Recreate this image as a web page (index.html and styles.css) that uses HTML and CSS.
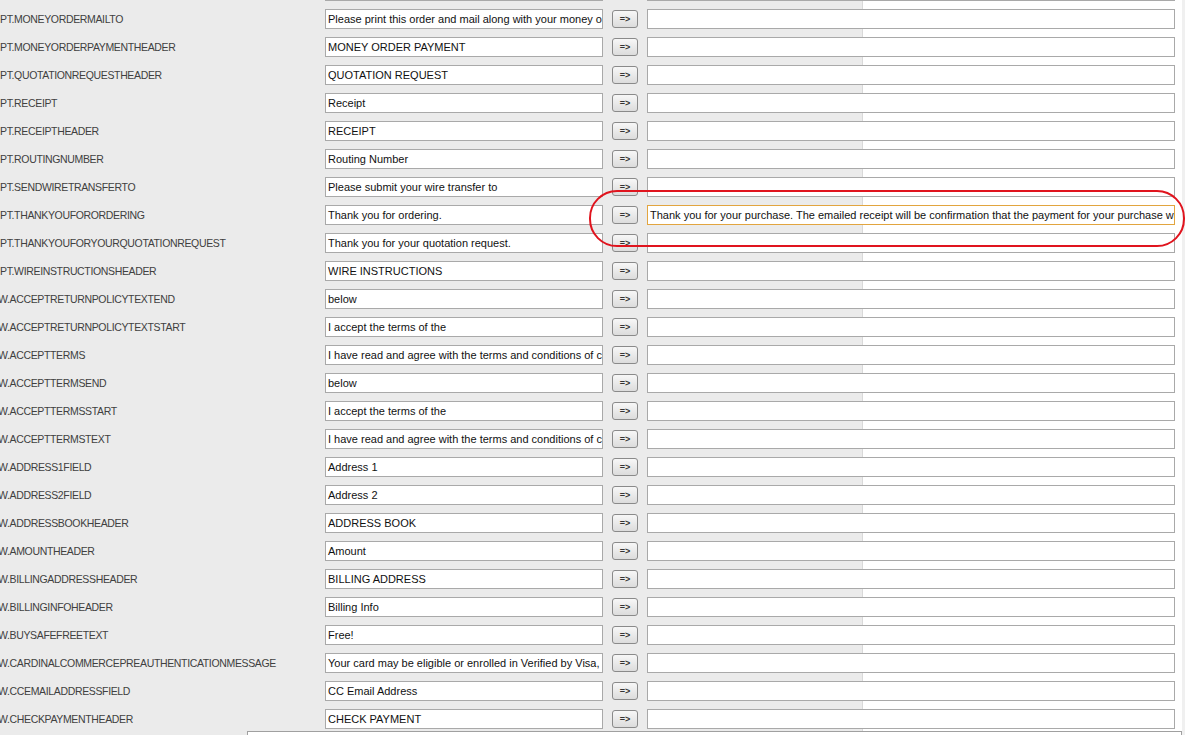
FILE: index.html
```html
<!DOCTYPE html>
<html>
<head>
<meta charset="utf-8">
<link rel="stylesheet" href="styles.css">
</head>
<body>
<div class="page">
  <div class="rows">
    <div class="row"><div class="label"></div><div class="src"></div><button class="copy">=&gt;</button><div class="dst"></div></div>
    <div class="row"><div class="label">PT.MONEYORDERMAILTO</div><div class="src">Please print this order and mail along with your money order</div><button class="copy">=&gt;</button><div class="dst"></div></div>
    <div class="row"><div class="label">PT.MONEYORDERPAYMENTHEADER</div><div class="src">MONEY ORDER PAYMENT</div><button class="copy">=&gt;</button><div class="dst"></div></div>
    <div class="row"><div class="label">PT.QUOTATIONREQUESTHEADER</div><div class="src">QUOTATION REQUEST</div><button class="copy">=&gt;</button><div class="dst"></div></div>
    <div class="row"><div class="label">PT.RECEIPT</div><div class="src">Receipt</div><button class="copy">=&gt;</button><div class="dst"></div></div>
    <div class="row"><div class="label">PT.RECEIPTHEADER</div><div class="src">RECEIPT</div><button class="copy">=&gt;</button><div class="dst"></div></div>
    <div class="row"><div class="label">PT.ROUTINGNUMBER</div><div class="src">Routing Number</div><button class="copy">=&gt;</button><div class="dst"></div></div>
    <div class="row"><div class="label">PT.SENDWIRETRANSFERTO</div><div class="src">Please submit your wire transfer to</div><button class="copy">=&gt;</button><div class="dst"></div></div>
    <div class="row"><div class="label">PT.THANKYOUFORORDERING</div><div class="src">Thank you for ordering.</div><button class="copy">=&gt;</button><div class="dst active">Thank you for your purchase. The emailed receipt will be confirmation that the payment for your purchase was received.</div></div>
    <div class="row"><div class="label">PT.THANKYOUFORYOURQUOTATIONREQUEST</div><div class="src">Thank you for your quotation request.</div><button class="copy">=&gt;</button><div class="dst"></div></div>
    <div class="row"><div class="label">PT.WIREINSTRUCTIONSHEADER</div><div class="src">WIRE INSTRUCTIONS</div><button class="copy">=&gt;</button><div class="dst"></div></div>
    <div class="row"><div class="label w">W.ACCEPTRETURNPOLICYTEXTEND</div><div class="src">below</div><button class="copy">=&gt;</button><div class="dst"></div></div>
    <div class="row"><div class="label w">W.ACCEPTRETURNPOLICYTEXTSTART</div><div class="src">I accept the terms of the</div><button class="copy">=&gt;</button><div class="dst"></div></div>
    <div class="row"><div class="label w">W.ACCEPTTERMS</div><div class="src">I have read and agree with the terms and conditions of companyname</div><button class="copy">=&gt;</button><div class="dst"></div></div>
    <div class="row"><div class="label w">W.ACCEPTTERMSEND</div><div class="src">below</div><button class="copy">=&gt;</button><div class="dst"></div></div>
    <div class="row"><div class="label w">W.ACCEPTTERMSSTART</div><div class="src">I accept the terms of the</div><button class="copy">=&gt;</button><div class="dst"></div></div>
    <div class="row"><div class="label w">W.ACCEPTTERMSTEXT</div><div class="src">I have read and agree with the terms and conditions of companyname</div><button class="copy">=&gt;</button><div class="dst"></div></div>
    <div class="row"><div class="label w">W.ADDRESS1FIELD</div><div class="src">Address 1</div><button class="copy">=&gt;</button><div class="dst"></div></div>
    <div class="row"><div class="label w">W.ADDRESS2FIELD</div><div class="src">Address 2</div><button class="copy">=&gt;</button><div class="dst"></div></div>
    <div class="row"><div class="label w">W.ADDRESSBOOKHEADER</div><div class="src">ADDRESS BOOK</div><button class="copy">=&gt;</button><div class="dst"></div></div>
    <div class="row"><div class="label w">W.AMOUNTHEADER</div><div class="src">Amount</div><button class="copy">=&gt;</button><div class="dst"></div></div>
    <div class="row"><div class="label w">W.BILLINGADDRESSHEADER</div><div class="src">BILLING ADDRESS</div><button class="copy">=&gt;</button><div class="dst"></div></div>
    <div class="row"><div class="label w">W.BILLINGINFOHEADER</div><div class="src">Billing Info</div><button class="copy">=&gt;</button><div class="dst"></div></div>
    <div class="row"><div class="label w">W.BUYSAFEFREETEXT</div><div class="src">Free!</div><button class="copy">=&gt;</button><div class="dst"></div></div>
    <div class="row"><div class="label w">W.CARDINALCOMMERCEPREAUTHENTICATIONMESSAGE</div><div class="src">Your card may be eligible or enrolled in Verified by Visa, MasterCard SecureCode</div><button class="copy">=&gt;</button><div class="dst"></div></div>
    <div class="row"><div class="label w">W.CCEMAILADDRESSFIELD</div><div class="src">CC Email Address</div><button class="copy">=&gt;</button><div class="dst"></div></div>
    <div class="row"><div class="label w">W.CHECKPAYMENTHEADER</div><div class="src">CHECK PAYMENT</div><button class="copy">=&gt;</button><div class="dst"></div></div>
  </div>
  <div class="footer-box"></div>
  <div class="highlight"></div>
</div>
</body>
</html>
```

FILE: styles.css
```css
html, body {
  margin: 0;
  padding: 0;
  width: 1185px;
  height: 735px;
  overflow: hidden;
}
body {
  font-family: Tahoma, "Liberation Sans", Arial, sans-serif;
  font-size: 11px;
  color: #000;
}
.page {
  position: relative;
  width: 1185px;
  height: 735px;
  background: linear-gradient(to right, #ebebeb 0, #ebebeb 862px, #d9d9d9 862px, #d9d9d9 863px, #ffffff 863px, #ffffff 1182px, #f0f0f0 1182px);
  overflow: hidden;
}
.rows {
  margin-top: -23px;
  display: flex;
  flex-direction: column;
}
.row {
  height: 28px;
  display: flex;
  align-items: center;
}
.label {
  width: 325px;
  flex: none;
  color: #404040;
  white-space: nowrap;
  overflow: hidden;
  font-size: 10.5px;
  letter-spacing: -0.35px;
}
.label.w {
  margin-left: -2px;
  width: 327px;
}
.src, .dst {
  box-sizing: border-box;
  height: 20px;
  line-height: 18px;
  background: #fff;
  border: 1px solid #a9a9a9;
  padding: 0 2px;
  white-space: nowrap;
  overflow: hidden;
  flex: none;
  color: #111;
}
.src {
  width: 278px;
}
.copy {
  flex: none;
  box-sizing: border-box;
  width: 26px;
  height: 18px;
  margin: 0 9px 0 9px;
  padding: 0;
  border: 1px solid #8a8a8a;
  border-radius: 3px;
  background: linear-gradient(#f7f7f7, #dcdcdc);
  font-family: "Liberation Sans", Arial, sans-serif;
  font-size: 9px;
  font-weight: bold;
  color: #333;
  line-height: 14px;
}
.dst {
  width: 528px;
}
.dst.active {
  border-color: #e2a53f;
}
.footer-box {
  position: absolute;
  left: 247px;
  top: 731px;
  width: 935px;
  height: 10px;
  box-sizing: border-box;
  border: 1px solid #a0a0a0;
  background: #fff;
}
.highlight {
  position: absolute;
  left: 589px;
  top: 190px;
  width: 596px;
  height: 57px;
  box-sizing: border-box;
  border: 2px solid #e0141e;
  border-radius: 28px;
}
```
